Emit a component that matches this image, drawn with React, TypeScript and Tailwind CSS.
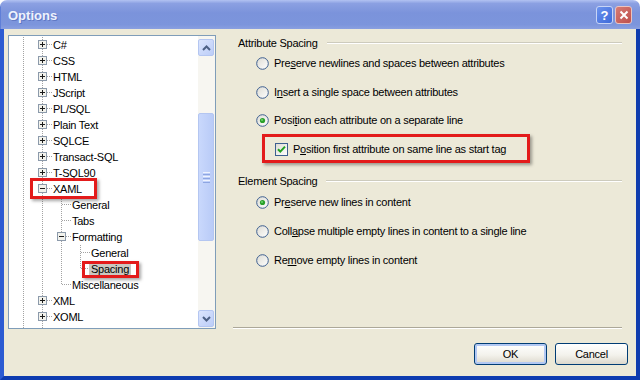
import React from "react";

type CellKind = "line" | "none" | "leaf" | "leafLast" | "plus" | "minus";

const dotted = { stroke: "#a3a3a3", strokeWidth: 1, strokeDasharray: "1 1" };

function TreeCell({ kind }: { kind: CellKind }) {
  return (
    <svg width="19" height="16" className="block shrink-0">
      {kind !== "none" && (
        <line x1="9.5" y1="0" x2="9.5" y2={kind === "leafLast" ? 8 : 16} {...dotted} />
      )}
      {(kind === "leaf" || kind === "leafLast") && (
        <line x1="10" y1="7.5" x2="19" y2="7.5" {...dotted} />
      )}
      {(kind === "plus" || kind === "minus") && (
        <>
          <line x1="14" y1="7.5" x2="19" y2="7.5" {...dotted} />
          <rect x="5.5" y="3.5" width="8" height="8" fill="#f2f2ec" stroke="#8c9aab" />
          <line x1="7" y1="7.5" x2="12" y2="7.5" stroke="#1a1a1a" />
          {kind === "plus" && <line x1="9.5" y1="5" x2="9.5" y2="10" stroke="#1a1a1a" />}
        </>
      )}
    </svg>
  );
}

type Row = { label: string; cells: CellKind[]; selected?: boolean };

const rows: Row[] = [
  { label: "C#", cells: ["line", "plus"] },
  { label: "CSS", cells: ["line", "plus"] },
  { label: "HTML", cells: ["line", "plus"] },
  { label: "JScript", cells: ["line", "plus"] },
  { label: "PL/SQL", cells: ["line", "plus"] },
  { label: "Plain Text", cells: ["line", "plus"] },
  { label: "SQLCE", cells: ["line", "plus"] },
  { label: "Transact-SQL", cells: ["line", "plus"] },
  { label: "T-SQL90", cells: ["line", "plus"] },
  { label: "XAML", cells: ["line", "minus"] },
  { label: "General", cells: ["line", "line", "leaf"] },
  { label: "Tabs", cells: ["line", "line", "leaf"] },
  { label: "Formatting", cells: ["line", "line", "minus"] },
  { label: "General", cells: ["line", "line", "line", "leaf"] },
  { label: "Spacing", cells: ["line", "line", "line", "leafLast"], selected: true },
  { label: "Miscellaneous", cells: ["line", "line", "leafLast"] },
  { label: "XML", cells: ["line", "plus"] },
  { label: "XOML", cells: ["line", "plus"] },
];

function Arrow({ up }: { up?: boolean }) {
  return (
    <svg width="9" height="6" viewBox="0 0 9 6">
      <path
        d={up ? "M1 5 L4.5 1.5 L8 5" : "M1 1 L4.5 4.5 L8 1"}
        fill="none"
        stroke="#4d6185"
        strokeWidth="2"
      />
    </svg>
  );
}

function ScrollBtn({ up }: { up?: boolean }) {
  return (
    <div className="flex h-[17px] w-[16px] items-center justify-center rounded-[2px] border border-[#b4c6f1] bg-[linear-gradient(135deg,#dbe5fd,#bccdf8)]">
      <Arrow up={up} />
    </div>
  );
}

function Radio({ checked }: { checked?: boolean }) {
  return (
    <svg width="13" height="13" viewBox="0 0 13 13" className="block shrink-0">
      <defs>
        <linearGradient id={checked ? "rg1" : "rg0"} x1="0" y1="0" x2="1" y2="1">
          <stop offset="0" stopColor="#dcdbd3" />
          <stop offset="1" stopColor="#ffffff" />
        </linearGradient>
      </defs>
      <circle cx="6.5" cy="6.5" r="5.8" fill={`url(#${checked ? "rg1" : "rg0"})`} stroke="#3d5f90" strokeWidth="1" />
      {checked && (
        <>
          <circle cx="6.5" cy="6.5" r="2.6" fill="#2aa12a" />
          <circle cx="6" cy="6" r="1" fill="#6fd36f" />
        </>
      )}
    </svg>
  );
}

function Checkbox() {
  return (
    <svg width="13" height="13" viewBox="0 0 13 13" className="block shrink-0">
      <defs>
        <linearGradient id="cbg" x1="0" y1="0" x2="1" y2="1">
          <stop offset="0" stopColor="#dcdbd3" />
          <stop offset="1" stopColor="#ffffff" />
        </linearGradient>
      </defs>
      <rect x="0.5" y="0.5" width="12" height="12" fill="url(#cbg)" stroke="#3d5f90" />
      <path d="M3 6.2 L5.3 8.6 L10 3.6" fill="none" stroke="#21a121" strokeWidth="2" />
    </svg>
  );
}

function Opt({ children, checked }: { children: React.ReactNode; checked?: boolean }) {
  return (
    <div className="flex h-[16px] items-center pl-[23px]">
      <Radio checked={checked} />
      <span className="ml-[5px] whitespace-nowrap">{children}</span>
    </div>
  );
}

function GroupLabel({ text }: { text: string }) {
  return (
    <div className="flex h-[16px] items-center pl-[5px]">
      <span className="whitespace-nowrap">{text}</span>
      <div className="ml-[9px] h-[2px] flex-1 border-t border-b border-t-[#cdcbbd] border-b-white" />
    </div>
  );
}

export default function App() {
  return (
    <div className="relative h-[380px] w-[640px] overflow-hidden bg-white font-[Liberation_Sans,Arial,sans-serif] text-[11px] tracking-[-0.25px] text-black">
      <div className="flex h-[380px] w-[640px] flex-col overflow-hidden rounded-t-[7px]">
        {/* Title bar */}
        <div className="flex h-[29px] shrink-0 items-center border-l border-[#5f7fd8] bg-[linear-gradient(#b2c2f2_0%,#8ba0e2_12%,#7b93db_45%,#7c95dc_85%,#8aa0e0_100%)] pl-[7px] pr-[8px]">
          <span className="pt-[2px] text-[13px] font-bold tracking-normal text-[#eef2fd] [text-shadow:1px_1px_0_#6078c4]">
            Options
          </span>
          <div className="ml-auto flex gap-[2px] pt-[1px]">
            <div className="flex h-[18px] w-[17px] items-center justify-center rounded-[3px] border border-[#c7d4f6] bg-[linear-gradient(135deg,#6c93ee,#3d69d9)] text-[13px] font-bold leading-none tracking-normal text-white">
              ?
            </div>
            <div className="flex h-[18px] w-[17px] items-center justify-center rounded-[3px] border border-[#eac3c0] bg-[linear-gradient(135deg,#d77c74,#be4f4c)]">
              <svg width="10" height="10" viewBox="0 0 10 10">
                <path d="M1.5 1.5 L8.5 8.5 M8.5 1.5 L1.5 8.5" stroke="#fff" strokeWidth="2" />
              </svg>
            </div>
          </div>
        </div>

        {/* Body */}
        <div className="flex flex-1 flex-col border-b-[4px] border-l-[4px] border-r-[4px] border-b-[#0d3bb0] border-l-[#2c5bd2] border-r-[#0f3cae] bg-[#ece9d8]">
          <div className="flex h-[301px] shrink-0">
            {/* Tree */}
            <div className="ml-[4px] mt-[6px] flex h-[294px] w-[208px] shrink-0 border border-[#7f9db9] bg-white">
              <div className="flex-1 overflow-hidden pl-[5px] pt-[1px]">
                {rows.map((r, i) => (
                  <div key={i} className="flex h-[16px] items-center">
                    {r.cells.map((c, j) => (
                      <TreeCell key={j} kind={c} />
                    ))}
                    <span
                      className={`ml-[-1px] whitespace-nowrap px-[2px] leading-[15px] ${
                        r.selected ? "bg-[#cac8c1]" : ""
                      }`}
                    >
                      {r.label}
                    </span>
                  </div>
                ))}
                <div className="flex h-[4px]">
                  <svg width="19" height="4" className="block">
                    <line x1="9.5" y1="0" x2="9.5" y2="4" {...dotted} />
                  </svg>
                  <svg width="19" height="4" className="block">
                    <line x1="9.5" y1="0" x2="9.5" y2="4" {...dotted} />
                  </svg>
                </div>
              </div>
              <div className="flex w-[17px] shrink-0 flex-col bg-[#f7f6f1] pb-[1px] pt-[3px]">
                <ScrollBtn up />
                <div className="h-[57px]" />
                <div className="flex h-[128px] w-[16px] items-center justify-center rounded-[2px] border border-[#b4c6f1] bg-[linear-gradient(90deg,#c9d8fc,#b9cbf7)]">
                  <div className="flex flex-col gap-[1px]">
                    <div className="h-[1px] w-[7px] bg-[#eef3fe]" />
                    <div className="h-[1px] w-[7px] bg-[#8ea6e2]" />
                    <div className="h-[1px] w-[7px] bg-[#eef3fe]" />
                    <div className="h-[1px] w-[7px] bg-[#8ea6e2]" />
                    <div className="h-[1px] w-[7px] bg-[#eef3fe]" />
                    <div className="h-[1px] w-[7px] bg-[#8ea6e2]" />
                  </div>
                </div>
                <div className="flex-1" />
                <ScrollBtn />
              </div>
            </div>

            {/* Right panel */}
            <div className="ml-[17px] flex w-[389px] flex-col">
              <div className="mt-[6px]">
                <GroupLabel text="Attribute Spacing" />
              </div>
              <div className="mt-[4px]">
                <Opt>
                  Pre<u>s</u>erve newlines and spaces between attributes
                </Opt>
              </div>
              <div className="mt-[13px]">
                <Opt>
                  I<u>n</u>sert a single space between attributes
                </Opt>
              </div>
              <div className="mt-[12px]">
                <Opt checked>
                  Posi<u>t</u>ion each attribute on a separate line
                </Opt>
              </div>
              <div className="mt-[13px] flex h-[16px] items-center pl-[42px]">
                <Checkbox />
                <span className="ml-[5px] whitespace-nowrap">
                  P<u>o</u>sition first attribute on same line as start tag
                </span>
              </div>
              <div className="mt-[16px]">
                <GroupLabel text="Element Spacing" />
              </div>
              <div className="mt-[5px]">
                <Opt checked>
                  Pr<u>e</u>serve new lines in content
                </Opt>
              </div>
              <div className="mt-[13px]">
                <Opt>
                  Coll<u>a</u>pse multiple empty lines in content to a single line
                </Opt>
              </div>
              <div className="mt-[13px]">
                <Opt>
                  Re<u>m</u>ove empty lines in content
                </Opt>
              </div>
              <div className="mb-[1px] mt-auto h-[2px] border-b border-t border-b-white border-t-[#aca899]" />
            </div>
          </div>

          {/* Buttons */}
          <div className="mt-[13px] flex justify-end gap-[8px] pr-[8px]">
            <button className="h-[22px] w-[73px] rounded-[3px] border border-[#003c74] bg-[linear-gradient(#ffffff,#f3f2ec_55%,#dcd8cc)] text-[11px] text-black shadow-[inset_0_0_0_2px_#b2c8f3]">
              OK
            </button>
            <button className="h-[22px] w-[73px] rounded-[3px] border border-[#003c74] bg-[linear-gradient(#ffffff,#f3f2ec_55%,#dcd8cc)] text-[11px] text-black">
              Cancel
            </button>
          </div>
        </div>
      </div>

      {/* Red annotation rectangles */}
      <div className="absolute left-[30px] top-[178px] h-[21px] w-[67px] border-[3px] border-[#e31b1b] shadow-[2px_2px_3px_rgba(0,0,0,0.35)]" />
      <div className="absolute left-[82px] top-[261px] h-[17px] w-[57px] border-[3px] border-[#e31b1b] shadow-[2px_2px_3px_rgba(0,0,0,0.35)]" />
      <div className="absolute left-[262px] top-[134px] h-[29px] w-[268px] border-[3px] border-[#e31b1b] shadow-[2px_2px_3px_rgba(0,0,0,0.35)]" />
    </div>
  );
}
